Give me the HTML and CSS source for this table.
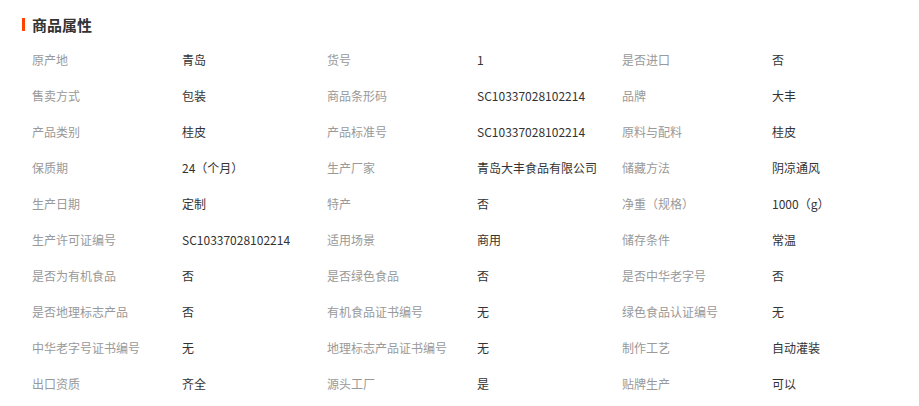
FILE: index.html
```html
<!DOCTYPE html>
<html lang="zh">
<head>
<meta charset="utf-8">
<title>商品属性</title>
<link rel="stylesheet" href="styles.css">
</head>
<body>
<div class="attrs">
  <h3 class="attrs-title">商品属性</h3>
  <div class="attrs-grid">
    <span class="k">原产地</span><span class="v">青岛</span>
    <span class="k">货号</span><span class="v">1</span>
    <span class="k">是否进口</span><span class="v">否</span>

    <span class="k">售卖方式</span><span class="v">包装</span>
    <span class="k">商品条形码</span><span class="v">SC10337028102214</span>
    <span class="k">品牌</span><span class="v">大丰</span>

    <span class="k">产品类别</span><span class="v">桂皮</span>
    <span class="k">产品标准号</span><span class="v">SC10337028102214</span>
    <span class="k">原料与配料</span><span class="v">桂皮</span>

    <span class="k">保质期</span><span class="v">24（个月）</span>
    <span class="k">生产厂家</span><span class="v">青岛大丰食品有限公司</span>
    <span class="k">储藏方法</span><span class="v">阴凉通风</span>

    <span class="k">生产日期</span><span class="v">定制</span>
    <span class="k">特产</span><span class="v">否</span>
    <span class="k">净重（规格）</span><span class="v">1000（g）</span>

    <span class="k">生产许可证编号</span><span class="v">SC10337028102214</span>
    <span class="k">适用场景</span><span class="v">商用</span>
    <span class="k">储存条件</span><span class="v">常温</span>

    <span class="k">是否为有机食品</span><span class="v">否</span>
    <span class="k">是否绿色食品</span><span class="v">否</span>
    <span class="k">是否中华老字号</span><span class="v">否</span>

    <span class="k">是否地理标志产品</span><span class="v">否</span>
    <span class="k">有机食品证书编号</span><span class="v">无</span>
    <span class="k">绿色食品认证编号</span><span class="v">无</span>

    <span class="k">中华老字号证书编号</span><span class="v">无</span>
    <span class="k">地理标志产品证书编号</span><span class="v">无</span>
    <span class="k">制作工艺</span><span class="v">自动灌装</span>

    <span class="k">出口资质</span><span class="v">齐全</span>
    <span class="k">源头工厂</span><span class="v">是</span>
    <span class="k">贴牌生产</span><span class="v">可以</span>
  </div>
</div>
</body>
</html>
```

FILE: styles.css
```css
html, body {
  margin: 0;
  padding: 0;
  background: #fff;
}
body {
  font-family: "Noto Sans CJK SC", "Liberation Sans", sans-serif;
  font-size: 12px;
  color: #333;
}
.attrs {
  padding: 0 0 0 22px;
}
.attrs-title {
  margin: 0;
  height: 41px;
  box-sizing: border-box;
  padding-top: 13px;
  padding-bottom: 5px;
  display: flex;
  align-items: center;
  gap: 7px;
  font-size: 15px;
  font-weight: bold;
  color: #333;
}
.attrs-title::before {
  content: "";
  width: 3px;
  height: 13px;
  background: #ff4400;
}
.attrs-grid {
  display: grid;
  grid-template-columns: 150px 145px 150px 145px 150px 145px;
  grid-auto-rows: 36px;
  padding-left: 10px;
  align-items: center;
}
.k {
  color: #999;
  white-space: nowrap;
}
.v {
  color: #333;
  white-space: nowrap;
}
```
